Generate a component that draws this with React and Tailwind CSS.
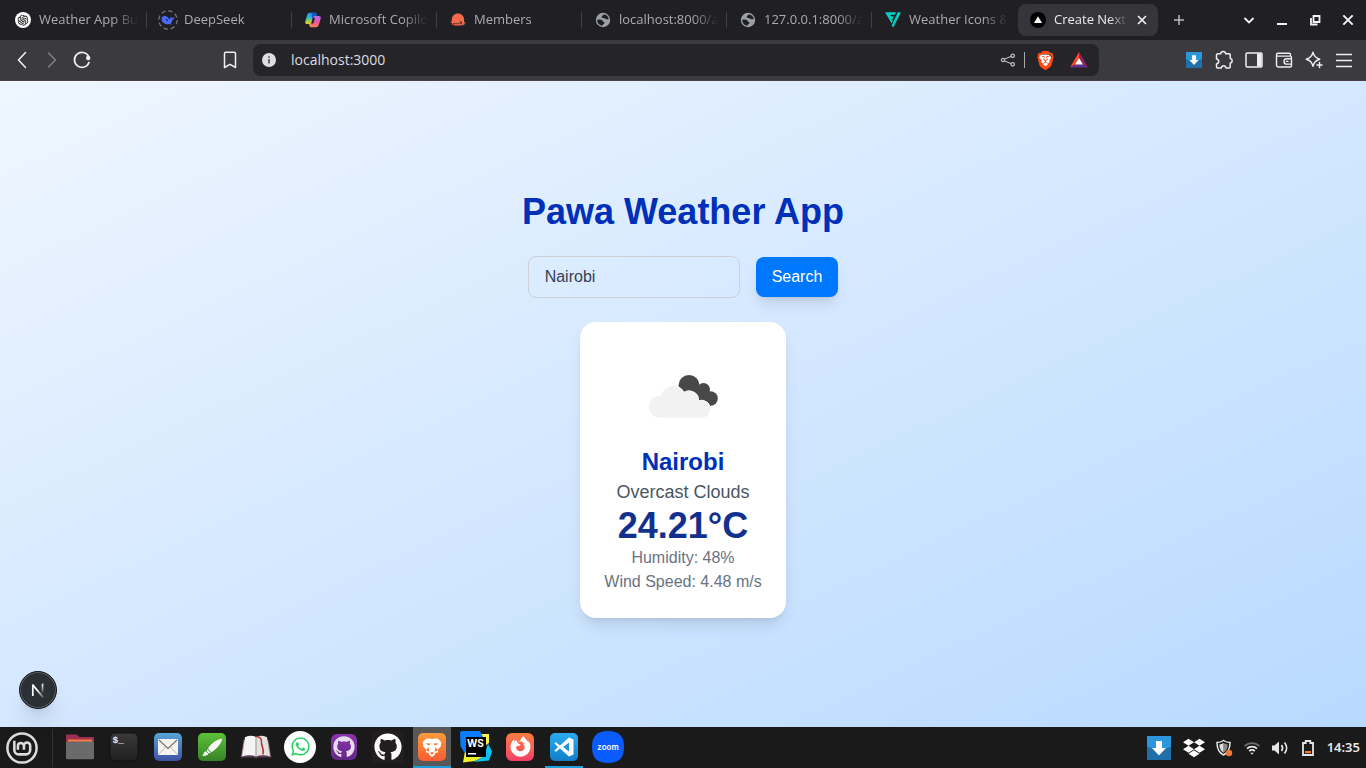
import React from "react";
import { AiOutlineOpenAI } from "react-icons/ai";
import { FaWhatsapp, FaGithub, FaFirefoxBrowser, FaDropbox } from "react-icons/fa";
import { SiBrave } from "react-icons/si";

function GlobeIcon() {
  return (
    <svg viewBox="0 0 16 16" className="size-4">
      <circle cx="8" cy="8" r="7.2" fill="#9aa0a6" />
      <path d="M8.500 2.400 7 4.200c-.6.7-.2 1.600.8 1.800l2.300.4c.6.800 1.800 1.200 3.700.6-.2-2.300-2.300-4.600-5.300-4.600zM2.200 8c1.600-.5 4-.6 5 .3.700.7.6 1.500 1.700 1.900.9.300.8 1.200.1 1.600-1 .5-1 .9-1.600 1.900C4.200 13.300 2.200 10.800 2.200 8z" fill="#202024" />
    </svg>
  );
}

function OpenAiTabIcon() {
  return (
    <span className="flex size-4 items-center justify-center rounded-full bg-white text-[#202024]">
      <AiOutlineOpenAI size={14} />
    </span>
  );
}

function DeepSeekIcon() {
  return (
    <svg viewBox="0 0 20 20" className="-mx-0.5 size-5 shrink-0">
      <circle cx="10" cy="10" r="9.200" fill="none" stroke="#77777c" strokeWidth="1.200" strokeDasharray="4.400 2.825" />
      <path d="M3.600 8.200c.6-1.900 2.600-2.500 4.400-1.900 1.700.6 2.400 2.100 3.900 3.100.8-.6.4-1.600.1-2.500 1 .1 1.500.9 2.200 1 .7 0 1.200-.7 2.200-.7-.1 1.300-.8 2-1.800 2.300-.3 1.800-.9 2.900-1.900 3.800l.9 1.100c-1.100.2-1.900 0-2.600-.4-3.700 1-7.900-1.700-7.400-5.800z" fill="#4d6bfe" />
      <path d="M7.500 8.800c1.200 0 2.500 1 2.900 2.400-1.200.1-2.500-.8-2.900-2.400z" fill="#202024" />
    </svg>
  );
}

function CopilotIcon() {
  return (
    <svg viewBox="0 0 16 16" className="size-4">
      <defs>
        <linearGradient id="cpA" x1="0" y1="0" x2="0" y2="1">
          <stop offset="0" stopColor="#1f9bf5" />
          <stop offset="0.450" stopColor="#2fb8c8" />
          <stop offset="0.750" stopColor="#9ccf4a" />
          <stop offset="1" stopColor="#f5c72c" />
        </linearGradient>
        <linearGradient id="cpB" x1="0.600" y1="0" x2="0.300" y2="1">
          <stop offset="0" stopColor="#b66bf0" />
          <stop offset="0.500" stopColor="#f0559a" />
          <stop offset="1" stopColor="#fb8a45" />
        </linearGradient>
      </defs>
      <path d="M5 .8h4.800c1 0 1.500.6 1.800 1.500l.5 1.700H9.800c-1 0-1.500.5-1.800 1.400L6.500 10.400c-.4 1.200-1 1.600-2 1.600H2.200C.6 12-.1 10.900.3 9.400l1.900-6.500C2.700 1.500 3.600.8 5 .8z" fill="url(#cpA)" />
      <path d="M11 15.200H6.200c-1 0-1.500-.6-1.800-1.500L3.900 12h.6c1 0 1.600-.4 2-1.600L8 5.400C8.300 4.500 8.800 4 9.800 4h4c1.600 0 2.300 1.100 1.900 2.600l-1.900 6.500c-.5 1.400-1.400 2.100-2.800 2.100z" fill="url(#cpB)" />
      <path d="M9.800.8c1 0 1.500.6 1.800 1.500l.5 1.700H9.800c-1 0-1.500.5-1.800 1.400L7.300 8 6.500 2C6.300 1.300 7.500.8 8.500.8z" fill="#1454c4" />
      <path d="M8 5.800h2L8.300 11.500h-2z" fill="#202024" />
    </svg>
  );
}

function MembersIcon() {
  return (
    <svg viewBox="0 0 16 16" className="size-4">
      <path d="M8 1.400c3.600 0 6.100 2.700 6.100 6 0 1.400-.2 2 .5 2.900.4.500.9.400 1.200.700-.4.700-1.300.7-2 .2-.2.900.3 1.400 1 1.500-.5.700-2 .6-2.500-.4-.4.500-.4.800-.1 1.200H3.900c.4-.5.300-.9 0-1.300-.8.700-2 .6-2.500 0 .8-.3.800-1 .8-1.600-.6.300-1.500.2-1.900-.3 1.100-.4 1.500-1.300 1.500-2.900 0-3.300 2.600-6 6.200-6z" fill="#f9694b" />
      <path d="M3 11.700h6M10 9.800v2h1.500V9.800z" stroke="#202024" strokeWidth=".7" fill="none" />
    </svg>
  );
}

function WeatherIconsTabIcon() {
  return (
    <svg viewBox="0 0 16 16" className="size-4">
      <path d="M0 .3h11L9.800 2.800H5.200l.9 1.800h2.800L7.700 7H7l.8 1.700L6.700 11.500z" fill="#00d1c4" />
      <path d="M12.700.3H16L8.200 15.800 6.900 13.200z" fill="#00d1c4" />
    </svg>
  );
}

function NextTabIcon() {
  return (
    <svg viewBox="0 0 16 16" className="size-4">
      <circle cx="8" cy="8" r="8" fill="#000" />
      <path d="M8 4.200 12 11H4z" fill="#fff" />
    </svg>
  );
}

const TABS = [
  { label: "Weather App Bu", Icon: OpenAiTabIcon },
  { label: "DeepSeek", Icon: DeepSeekIcon },
  { label: "Microsoft Copilo", Icon: CopilotIcon },
  { label: "Members", Icon: MembersIcon },
  { label: "localhost:8000/a", Icon: GlobeIcon },
  { label: "127.0.0.1:8000/a", Icon: GlobeIcon },
  { label: "Weather Icons &", Icon: WeatherIconsTabIcon },
];

const FADE = "[mask-image:linear-gradient(to_right,black_74%,transparent)]";

function CloseGlyph({ className }) {
  return (
    <svg viewBox="0 0 12 12" className={className}>
      <path d="M2 2l8 8M10 2l-8 8" stroke="#f2f2f4" strokeWidth="1.700" fill="none" />
    </svg>
  );
}

function TabStrip() {
  return (
    <div className="flex h-10 items-center bg-[#202024] pl-0.5 text-[13px]">
      <div role="tablist" className="flex min-w-0 flex-1 items-center">
        {TABS.map(({ label, Icon }, i) => (
          <button key={label} role="tab" type="button" aria-selected="false" className="flex h-8 w-[145px] min-w-0 items-center gap-2 pl-[13px] text-left text-[#acacb0]">
            <span className="flex w-4 shrink-0 justify-center"><Icon /></span>
            <span className={`min-w-0 flex-1 overflow-hidden whitespace-nowrap ${FADE}`}>{label}</span>
            <span className={`h-4 w-px shrink-0 ${i < TABS.length - 1 ? "bg-[#3f3f44]" : "bg-transparent"}`} />
          </button>
        ))}
        <div className="ml-px flex h-8 w-[140px] min-w-0 items-center gap-2 rounded-lg bg-[#35353a] pr-2.5 pl-3 text-[#ececef]">
          <button role="tab" type="button" aria-selected="true" className="flex min-w-0 flex-1 items-center gap-2">
            <span className="shrink-0"><NextTabIcon /></span>
            <span className={`min-w-0 flex-1 overflow-hidden text-left whitespace-nowrap ${FADE}`}>Create Next</span>
          </button>
          <button type="button" aria-label="Close tab" className="shrink-0"><CloseGlyph className="size-3" /></button>
        </div>
        <button type="button" aria-label="New tab" className="ml-3.5">
          <svg viewBox="0 0 14 14" className="size-3.5"><path d="M7 2v10M2 7h10" stroke="#b9b9bd" strokeWidth="1.500" /></svg>
        </button>
      </div>
      <div className="flex items-center gap-[19px] pr-[11px]">
        <button type="button" aria-label="Search tabs">
          <svg viewBox="0 0 14 14" className="size-3.5"><path d="M2.500 5 7 9.500 11.500 5" stroke="#f2f2f4" strokeWidth="1.800" fill="none" /></svg>
        </button>
        <button type="button" aria-label="Minimize">
          <svg viewBox="0 0 14 14" className="size-3.5"><path d="M2 11h10" stroke="#f2f2f4" strokeWidth="2" /></svg>
        </button>
        <button type="button" aria-label="Restore">
          <svg viewBox="0 0 14 14" className="size-3.5"><path d="M5.500 3h6v6h-6zM3 5v6.500h6.500" stroke="#f2f2f4" strokeWidth="1.800" fill="none" /></svg>
        </button>
        <button type="button" aria-label="Close window"><CloseGlyph className="size-3.5" /></button>
      </div>
    </div>
  );
}

function BraveShield() {
  return (
    <span className="grid size-5 place-items-center">
      <svg viewBox="0 0 20 20" className="col-start-1 row-start-1 size-4"><path d="M5 3h10l3 4-3 9-5 3-5-3L2 7z" fill="#fff" /></svg>
      <SiBrave size={19} color="#fb4a14" className="col-start-1 row-start-1" />
    </span>
  );
}

function DownloadTile({ className }) {
  return (
    <svg viewBox="0 0 24 24" className={className}>
      <path d="M0 0h24v24H0z" fill="#1f6fab" />
      <path d="M0 0h24v10.500C16 14 8 14 0 10.500z" fill="#2b96dc" />
      <path d="M9 5h6v7h4l-7 7.500L5 12h4z" fill="#fff" />
    </svg>
  );
}

function Toolbar() {
  return (
    <div className="flex h-[41px] items-center border-b border-[#4a3f42] bg-[#3b3b3f] text-[#efeff2]">
      <div className="flex flex-none items-center gap-2.5 pl-3">
        <button type="button" aria-label="Back">
          <svg viewBox="0 0 20 20" className="size-5"><path d="M13.500 2.500 6.500 10l7 7.500" fill="none" stroke="currentColor" strokeWidth="1.600" strokeLinecap="round" strokeLinejoin="round" /></svg>
        </button>
        <button type="button" aria-label="Forward" className="text-[#7d7d82]">
          <svg viewBox="0 0 20 20" className="size-5"><path d="m6.500 3 7 7-7 7" fill="none" stroke="currentColor" strokeWidth="1.600" strokeLinecap="round" strokeLinejoin="round" /></svg>
        </button>
        <button type="button" aria-label="Reload">
          <svg viewBox="0 0 20 20" className="size-5"><path d="M17 12.500A7.500 7.500 0 1 1 16.500 6.200" fill="none" stroke="currentColor" strokeWidth="1.700" strokeLinecap="round" /><circle cx="16.200" cy="8" r="2.200" fill="currentColor" /></svg>
        </button>
      </div>
      <button type="button" aria-label="Bookmark this page" className="ml-32">
        <svg viewBox="0 0 20 20" className="size-5"><path d="M4.500 3.500c0-.8.500-1.300 1.300-1.300h8.400c.8 0 1.300.5 1.300 1.300v14L10 14.300 4.500 17.500z" fill="none" stroke="currentColor" strokeWidth="1.500" strokeLinejoin="round" /></svg>
      </button>
      <div className="ml-[13px] flex h-8 min-w-0 flex-1 items-center rounded-lg bg-[#252529] pr-2.5 pl-[9px]">
        <svg viewBox="0 0 14 14" className="size-3.5 shrink-0"><circle cx="7" cy="7" r="7" fill="#dededf" /><path d="M7 6v4.500M7 3.200v1.600" stroke="#4a4a4f" strokeWidth="1.600" /></svg>
        <input aria-label="Address" defaultValue="localhost:3000" className="ml-[15px] h-5 min-w-0 flex-1 bg-transparent pb-0.5 text-[14px] text-[#dcdce0] outline-none" />
        <button type="button" aria-label="Share">
          <svg viewBox="0 0 16 16" className="size-4"><path d="m4 7.300 7.500-3M4 8.700l7.500 3" stroke="#b9b9bd" strokeWidth="1.200" /><g fill="none" stroke="#b9b9bd" strokeWidth="1.300"><circle cx="3" cy="8" r="1.600" /><circle cx="12.700" cy="3.800" r="1.700" /><circle cx="12.700" cy="12.300" r="1.700" /></g></svg>
        </button>
        <span className="ml-2 h-4 w-px bg-[#a9a9ad]" />
        <button type="button" aria-label="Shields" className="ml-2.5"><BraveShield /></button>
        <button type="button" aria-label="Rewards" className="ml-3.5">
          <svg viewBox="0 0 20 20" className="size-5"><path d="M10 2 1 17.500l5-3 4-6.500z" fill="#ff4724" /><path d="m10 2 9 15.500-5-3L10 8z" fill="#9e1f63" /><path d="M1 17.500h18l-5-3H6z" fill="#662d91" /><path d="m10 8 4 6.500H6z" fill="#fff" /></svg>
        </button>
      </div>
      <div className="ml-[85px] flex flex-none items-center gap-2.5 pr-3">
        <button type="button" aria-label="Downloader" className="flex size-5 items-center justify-center"><DownloadTile className="size-4" /></button>
        <button type="button" aria-label="Extensions">
          <svg viewBox="0 0 20 20" className="size-5"><path d="M4 3.800h2.600c.3-1.500 1.200-2.300 2.600-2.300s2.300.8 2.600 2.300h3.400c.6 0 1 .4 1 1v3.400c1.300.4 2 1.200 2 2.500s-.7 2.100-2 2.500v3.900c0 .6-.4 1-1 1h-3.100c-.3-1.500-1-2.300-2.400-2.300s-2.200.8-2.500 2.300H3.500c-.6 0-1-.4-1-1v-3.200c1.500-.3 2.200-1.200 2.200-2.400S4 9.300 2.500 9V5c0-.7.600-1.200 1.500-1.200z" fill="none" stroke="currentColor" strokeWidth="1.500" strokeLinejoin="round" /></svg>
        </button>
        <button type="button" aria-label="Side panel">
          <svg viewBox="0 0 20 20" className="size-5"><rect x="2" y="3" width="16" height="14" rx="1.200" fill="none" stroke="currentColor" strokeWidth="1.500" /><path d="M13 3.500h4.500v13H13z" fill="currentColor" /></svg>
        </button>
        <button type="button" aria-label="Wallet">
          <svg viewBox="0 0 20 20" className="size-5"><path d="M16.500 6V4.500c0-.8-.5-1.300-1.300-1.300H3.800c-1.800 0-1.800 2.900 0 2.900h12.400c.8 0 1.300.5 1.300 1.300v8.300c0 .8-.5 1.300-1.300 1.300H4.600c-1.200 0-2.100-.8-2.100-2V4.500M17.500 8.700h-4.800a2.700 2.700 0 0 0 0 5.400h4.800M12.500 11.400h1.500" fill="none" stroke="currentColor" strokeWidth="1.400" strokeLinecap="round" /></svg>
        </button>
        <button type="button" aria-label="Assistant">
          <svg viewBox="0 0 20 20" className="size-5"><path d="M9 2.200c.8 4 2.600 6 6.800 7-4.200 1-6 3-6.800 7.200-.8-4.200-2.600-6.200-6.800-7.200 4.200-1 6-3 6.800-7z" fill="none" stroke="currentColor" strokeWidth="1.400" strokeLinejoin="round" /><path d="M15.500 12.500v5M13 15h5" stroke="currentColor" strokeWidth="1.500" strokeLinecap="round" /></svg>
        </button>
        <button type="button" aria-label="Menu">
          <svg viewBox="0 0 20 20" className="size-5"><path d="M2 4.500h16M2 10.500h16M2 16.500h16" stroke="currentColor" strokeWidth="1.500" /></svg>
        </button>
      </div>
    </div>
  );
}

function CloudsIcon() {
  return (
    <svg viewBox="0 0 100 100" className="size-[100px]" role="img" aria-label="Overcast clouds">
      <g fill="#484848">
        <circle cx="56" cy="39.500" r="10.500" />
        <circle cx="70.500" cy="43.500" r="6.500" />
        <circle cx="77.500" cy="52.500" r="7.300" />
        <path d="M56 40h14l8 12v8H58z" />
      </g>
      <path d="M27 71.500A10.800 10.800 0 1 1 29 50 12.300 12.300 0 0 1 52 46.500 9.500 9.500 0 0 1 66.500 55 8.700 8.700 0 1 1 67 71.500z" transform="translate(-1)" fill="#f2f2f2" stroke="#fff" strokeWidth="1.200" />
      <path d="M27 71.500A10.800 10.800 0 1 1 29 50 12.300 12.300 0 0 1 52 46.500 9.500 9.500 0 0 1 66.500 55 8.700 8.700 0 1 1 67 71.500z" transform="translate(-1)" fill="#f2f2f2" />
    </svg>
  );
}

function WeatherPage() {
  return (
    <main className="relative flex flex-1 flex-col items-center justify-center bg-linear-to-br from-[#eff6ff] to-[#b8d9ff] pt-0.5 font-['Liberation_Sans',sans-serif]">
      <h1 className="mb-6 text-4xl font-bold text-[#002fb8]">Pawa Weather App</h1>
      <form className="mb-6 flex items-center gap-4" onSubmit={(e) => e.preventDefault()}>
        <input type="text" aria-label="City" defaultValue="Nairobi" className="w-[212px] rounded-lg border border-[#ccd0d8] bg-transparent px-4 py-2 text-base text-[#364153] outline-none" />
        <button type="submit" className="rounded-lg bg-[#0077ff] px-4 py-2 text-base text-white shadow-lg">Search</button>
      </form>
      <section className="flex flex-col items-center rounded-2xl bg-white p-6 text-center shadow-lg">
        <CloudsIcon />
        <h2 className="text-2xl font-bold text-[#002fb8]">Nairobi</h2>
        <p className="text-lg text-[#4a5565]">Overcast Clouds</p>
        <p className="text-4xl font-bold text-[#12318f]">24.21°C</p>
        <p className="text-base text-[#6a7282]">Humidity: 48%</p>
        <p className="text-base text-[#6a7282]">Wind Speed: 4.48 m/s</p>
      </section>
      <button type="button" aria-label="Open Next.js Dev Tools" className="absolute bottom-[18px] left-[19px] flex size-[38px] items-center justify-center rounded-full border border-[#16181b] bg-[#2b3035] shadow-xl inset-ring inset-ring-[#5a5e63]">
        <svg viewBox="0 0 20 20" className="size-5">
          <defs>
            <linearGradient id="nDiag" x1="9" y1="10" x2="15" y2="18" gradientUnits="userSpaceOnUse"><stop stopColor="#fff" /><stop offset="1" stopColor="#fff" stopOpacity="0.200" /></linearGradient>
            <linearGradient id="nBar" x1="0" y1="4" x2="0" y2="14" gradientUnits="userSpaceOnUse"><stop stopColor="#fff" /><stop offset="1" stopColor="#fff" stopOpacity="0" /></linearGradient>
          </defs>
          <path d="M4.700 4.800l10.600 12.700" fill="none" stroke="url(#nDiag)" strokeWidth="1.800" />
          <path d="M4.800 16V4.500" stroke="#fff" strokeWidth="1.700" />
          <path d="M14.500 4.200h.01v9.500" fill="none" stroke="url(#nBar)" strokeWidth="1.700" />
        </svg>
      </button>
    </main>
  );
}

function MintIcon() {
  return (
    <svg viewBox="0 0 32 32" className="size-8">
      <circle cx="16" cy="16" r="14.600" fill="none" stroke="#dcdcdc" strokeWidth="2.500" />
      <path d="M7.500 8.500v9.700a4.600 4.600 0 0 0 4.600 4.600h7.500a4.600 4.600 0 0 0 4.600-4.600v-4.500a3.300 3.300 0 0 0-6.600 0V18M17.600 13.700a3.300 3.300 0 0 0-5.300-2.200c-.8.600-1 1.400-1 2.200V18" transform="translate(1.200 .7)scale(.95)" fill="none" stroke="#dcdcdc" strokeWidth="2.700" />
    </svg>
  );
}

function FolderIcon() {
  return (
    <svg viewBox="0 0 32 32" className="size-8">
      <path d="M2 4.500c0-.6.4-1 1-1h9.500L15.500 6H29c.6 0 1 .4 1 1v6H2z" fill="#9d3152" />
      <path d="M4 8.500h24V13H4z" fill="#f77a40" />
      <path d="M2 11.500c0-.6.500-1 1-1h26c.5 0 1 .4 1 1V27c0 .8-.4 1.200-1.200 1.200H3.200C2.400 28.200 2 27.800 2 27z" fill="#6a6a6a" />
    </svg>
  );
}

function TerminalIcon() {
  return (
    <svg viewBox="0 0 32 32" className="size-8">
      <defs><linearGradient id="tmG" x1="0" y1="0" x2="0" y2="1"><stop stopColor="#3a3a3a" /><stop offset="1" stopColor="#202020" /></linearGradient></defs>
      <rect x="2" y="2" width="28" height="28" rx="5" fill="url(#tmG)" stroke="#111" />
      <text x="4.500" y="12" fontFamily="Liberation Mono, monospace" fontWeight="bold" fontSize="9.500" fill="#f0f0f0">$_</text>
    </svg>
  );
}

function MailIcon() {
  return (
    <svg viewBox="0 0 32 32" className="size-8">
      <defs><linearGradient id="mailG" x1="0" y1="0" x2="0" y2="1"><stop stopColor="#56a5d8" /><stop offset="1" stopColor="#4052a4" /></linearGradient></defs>
      <rect x="2" y="2" width="28" height="28" rx="5" fill="url(#mailG)" />
      <rect x="6" y="8" width="20" height="16" rx="1" fill="#f6f3ed" />
      <path d="m7 9 9 8.500L25 9" fill="none" stroke="#77736f" strokeWidth="1.100" />
      <path d="m7 23 6.500-7M25 23l-6.500-7" fill="none" stroke="#a9a5a0" strokeWidth=".8" />
    </svg>
  );
}

function BrushIcon() {
  return (
    <svg viewBox="0 0 32 32" className="size-8">
      <defs><linearGradient id="brG" x1="0" y1="0" x2="0" y2="1"><stop stopColor="#5cc138" /><stop offset="1" stopColor="#378427" /></linearGradient></defs>
      <rect x="2" y="2" width="28" height="28" rx="5" fill="url(#brG)" />
      <path d="M26.300 7.500c-1 4.500-4.500 9.500-10.800 13.700L12 17.500C15.500 12 20.500 8.500 26.300 7.500z" fill="#fff" />
      <path d="m11.400 18.200 3.300 3.500-1.700.9-2.600-2.700z" fill="#fff" />
      <path d="m9.700 20.300 2.700 2.700c-1.400 1.700-3.800 2.200-6.200 1.500 1.500-.9 1.500-3.400 3.500-4.200z" fill="#fff" />
    </svg>
  );
}

function BookIcon() {
  return (
    <svg viewBox="0 0 32 32" className="size-8">
      <path d="M3.500 9h25l3 17.500H18.500l-2.500 1-2.500-1H.5z" fill="#5a3a52" />
      <path d="M5 6.200C9 4.300 13 4.300 16 6v19.500c-4-1.700-9-1.500-14 0z" fill="#f4f4f2" />
      <path d="M27 6.200C23 4.300 19 4.300 16 6v19.500c4-1.700 9-1.500 14 0z" fill="#e3e3e0" />
      <path d="M16 6v19.500" stroke="#a3a39e" strokeWidth="1.200" />
      <path d="M4.500 9 2 25.500M27.500 9 30 25.500" stroke="#c5c5c1" strokeWidth=".8" />
      <path d="M16.500 5.500c4 .5 5.500 3 5 6.500-.4 3 3 4.500 1.500 11.500" stroke="#c9232b" strokeWidth="1.500" fill="none" />
    </svg>
  );
}

function WhatsAppIcon() {
  return <span className="flex size-8 items-center justify-center rounded-full bg-white text-[#2bd366]"><FaWhatsapp size={21} /></span>;
}

function GitHubDesktopIcon() {
  return <span className="flex size-[26px] items-center justify-center rounded-md bg-linear-to-b from-[#8b35ab] to-[#632688] text-[#e7dcec]"><FaGithub size={22} /></span>;
}

function GitHubIcon() {
  return <span className="flex size-8 items-center justify-center bg-[#221e20] text-white"><FaGithub size={28} /></span>;
}

function BraveAppIcon() {
  return (
    <svg viewBox="0 0 32 32" className="size-8">
      <defs><linearGradient id="bvG" x1="0" y1="0" x2="0" y2="1"><stop stopColor="#fb9a3c" /><stop offset="1" stopColor="#fa5c33" /></linearGradient></defs>
      <rect x="2" y="2" width="28" height="28" rx="5" fill="url(#bvG)" />
      <path d="M13.500 7.500 16 8l2.500-.5 3.500.2 3.500 4-.8 1.600.5 1.500-3.700 4.400.7 2-3 .8-.7 2.200L16 26l-2.500-1.800-.7-2.200-3-.8.7-2-3.700-4.400.5-1.500-.8-1.600 3.500-4z" fill="#fff" />
      <path d="m9.700 12.200 4.800.2-.7 1.900-2.300-.3zM22.300 12.200l-4.800.2.7 1.900 2.300-.3z" fill="#fa8038" />
      <path d="m10.500 18 2.700-1.400-.5 2.200 1 1.900-2.700-.8zM21.500 18l-2.700-1.400.5 2.200-1 1.900 2.700-.8zM13.800 22l2.200-1.200 2.200 1.200-2.200 1.500z" fill="#fa7136" />
    </svg>
  );
}

function WebStormIcon() {
  return (
    <svg viewBox="0 0 32 32" className="size-8">
      <path d="M20 3h9v9l-6 4z" fill="#fcf84a" />
      <path d="M3 31.500 5 20l18 6-8 4z" fill="#eef02d" />
      <path d="M28 12.500l4 8-3 9-15 1.500 10-6z" fill="#07c3f2" />
      <path d="M0 2c0-1 .5-2 2-2h18l3 6L8 22l-4-1-3.500-6z" fill="#087cfa" />
      <path d="M6 6h20v20H6z" fill="#000" />
      <text x="7" y="15.500" fontFamily="Inter, sans-serif" fontWeight="bold" fontSize="10" fill="#fff">WS</text>
      <path d="M8 22h8v1.500H8z" fill="#fff" />
    </svg>
  );
}

function FirefoxIcon() {
  return <span className="flex size-7 items-center justify-center rounded-md bg-linear-to-b from-[#fb7c3e] to-[#f23f64] text-white"><FaFirefoxBrowser size={21} /></span>;
}

function VsCodeIcon() {
  return (
    <svg viewBox="0 0 32 32" className="size-8">
      <defs><linearGradient id="vsG" x1="0" y1="0" x2="0" y2="1"><stop stopColor="#2baaf0" /><stop offset="1" stopColor="#107fc8" /></linearGradient></defs>
      <rect x="2" y="2" width="28" height="28" rx="5" fill="url(#vsG)" />
      <path d="M21 6.500 25.500 8.500v15L21 25.500l-9-8-4 3.200-1.700-1L10 16l-3.700-3.700 1.700-1 4 3.200zM21 11.500 15.200 16l5.800 4.500z" fill="#fff" fillRule="evenodd" />
    </svg>
  );
}

function ZoomIcon() {
  return (
    <svg viewBox="0 0 32 32" className="size-8">
      <path d="M16 0c11 0 16 5 16 16s-5 16-16 16S0 27 0 16 5 0 16 0z" fill="#0b5cff" />
      <text x="16" y="18.500" textAnchor="middle" fontFamily="Inter, sans-serif" fontWeight="600" fontSize="8" fill="#fff">zoom</text>
    </svg>
  );
}

const APPS = [
  { name: "Files", Icon: FolderIcon },
  { name: "Terminal", Icon: TerminalIcon },
  { name: "Mail", Icon: MailIcon },
  { name: "Drawing", Icon: BrushIcon },
  { name: "Dictionary", Icon: BookIcon },
  { name: "WhatsApp", Icon: WhatsAppIcon },
  { name: "GitHub Desktop", Icon: GitHubDesktopIcon },
  { name: "GitHub", Icon: GitHubIcon },
  { name: "Brave", Icon: BraveAppIcon, state: "border-[#1f9ede] bg-[#585858]" },
  { name: "WebStorm", Icon: WebStormIcon },
  { name: "Firefox", Icon: FirefoxIcon },
  { name: "VS Code", Icon: VsCodeIcon, state: "border-[#1f9ede]" },
  { name: "Zoom", Icon: ZoomIcon },
];

function Taskbar() {
  return (
    <footer className="flex h-[41px] items-center bg-[#1a1a1a] text-[#e6e6e6]">
      <button type="button" aria-label="Menu" className="ml-1.5"><MintIcon /></button>
      <span className="ml-3.5 h-[38px] w-px bg-[#333]" />
      <nav aria-label="Applications" className="ml-2 flex h-full flex-1 gap-1.5">
        {APPS.map(({ name, Icon, state }) => (
          <button key={name} type="button" aria-label={name} className={`flex h-full w-[38px] items-center justify-center border-b-2 ${state ?? "border-transparent"}`}>
            <Icon />
          </button>
        ))}
      </nav>
      <div className="flex items-center pr-1.5">
        <button type="button" aria-label="Downloads"><DownloadTile className="size-6" /></button>
        <button type="button" aria-label="Dropbox" className="ml-3"><FaDropbox size={22} color="#fff" /></button>
        <button type="button" aria-label="Updates" className="ml-2.5">
          <svg viewBox="0 0 18 18" className="size-[18px]"><path d="M8.500 1.500c2 1.500 4 2 6.500 2 0 6-1.500 10-6.500 12.500C3.500 13.500 2 9.500 2 3.500c2.500 0 4.500-.5 6.500-2z" fill="none" stroke="#e6e6e6" strokeWidth="1.500" /><path d="M8.500 4c1.400.9 2.700 1.300 4.200 1.500-.2 3.800-1.400 6.600-4.200 8.300z" fill="#8b8b8b" /><path d="M8.500 4C7.100 4.900 5.800 5.300 4.300 5.500c.2 3.800 1.400 6.600 4.200 8.300z" fill="#ddd" /><circle cx="14" cy="14" r="3.200" fill="#f27835" /></svg>
        </button>
        <button type="button" aria-label="Network" className="ml-2.5">
          <svg viewBox="0 0 18 18" className="size-[18px]" fill="none" strokeWidth="1.800"><path d="M1.500 7.200a10.500 10.500 0 0 1 15 0" stroke="#6b6b6b" /><path d="M4 9.700a7 7 0 0 1 10 0M6.200 12.100a4 4 0 0 1 5.600 0" stroke="#e6e6e6" /><path d="m7.300 13.800 1.700 2 1.700-2z" fill="#e6e6e6" /></svg>
        </button>
        <button type="button" aria-label="Volume" className="ml-2.5">
          <svg viewBox="0 0 18 18" className="size-[18px]"><path d="M1 6.500h2.500L8 2.500v13l-4.500-4H1z" fill="#e6e6e6" /><path d="M10.500 6c1.300 1.800 1.300 4.200 0 6M13.500 3.500c2.800 3.300 2.800 7.700 0 11" fill="none" stroke="#e6e6e6" strokeWidth="1.700" /></svg>
        </button>
        <button type="button" aria-label="Battery" className="ml-2.5">
          <svg viewBox="0 0 18 18" className="size-[18px]"><path d="M4 4h2.700V2h4.600v2H14v12H4z" fill="none" stroke="#e6e6e6" strokeWidth="1.800" /><path d="M6 12h6v2.200H6z" fill="#f27835" /></svg>
        </button>
        <time className="ml-2.5 font-['Noto_Sans',sans-serif] text-[13px] font-semibold">14:35</time>
      </div>
    </footer>
  );
}

export default function App() {
  return (
    <div className="flex min-h-screen flex-col font-['Open_Sans',sans-serif]">
      <header>
        <TabStrip />
        <Toolbar />
      </header>
      <WeatherPage />
      <Taskbar />
    </div>
  );
}
